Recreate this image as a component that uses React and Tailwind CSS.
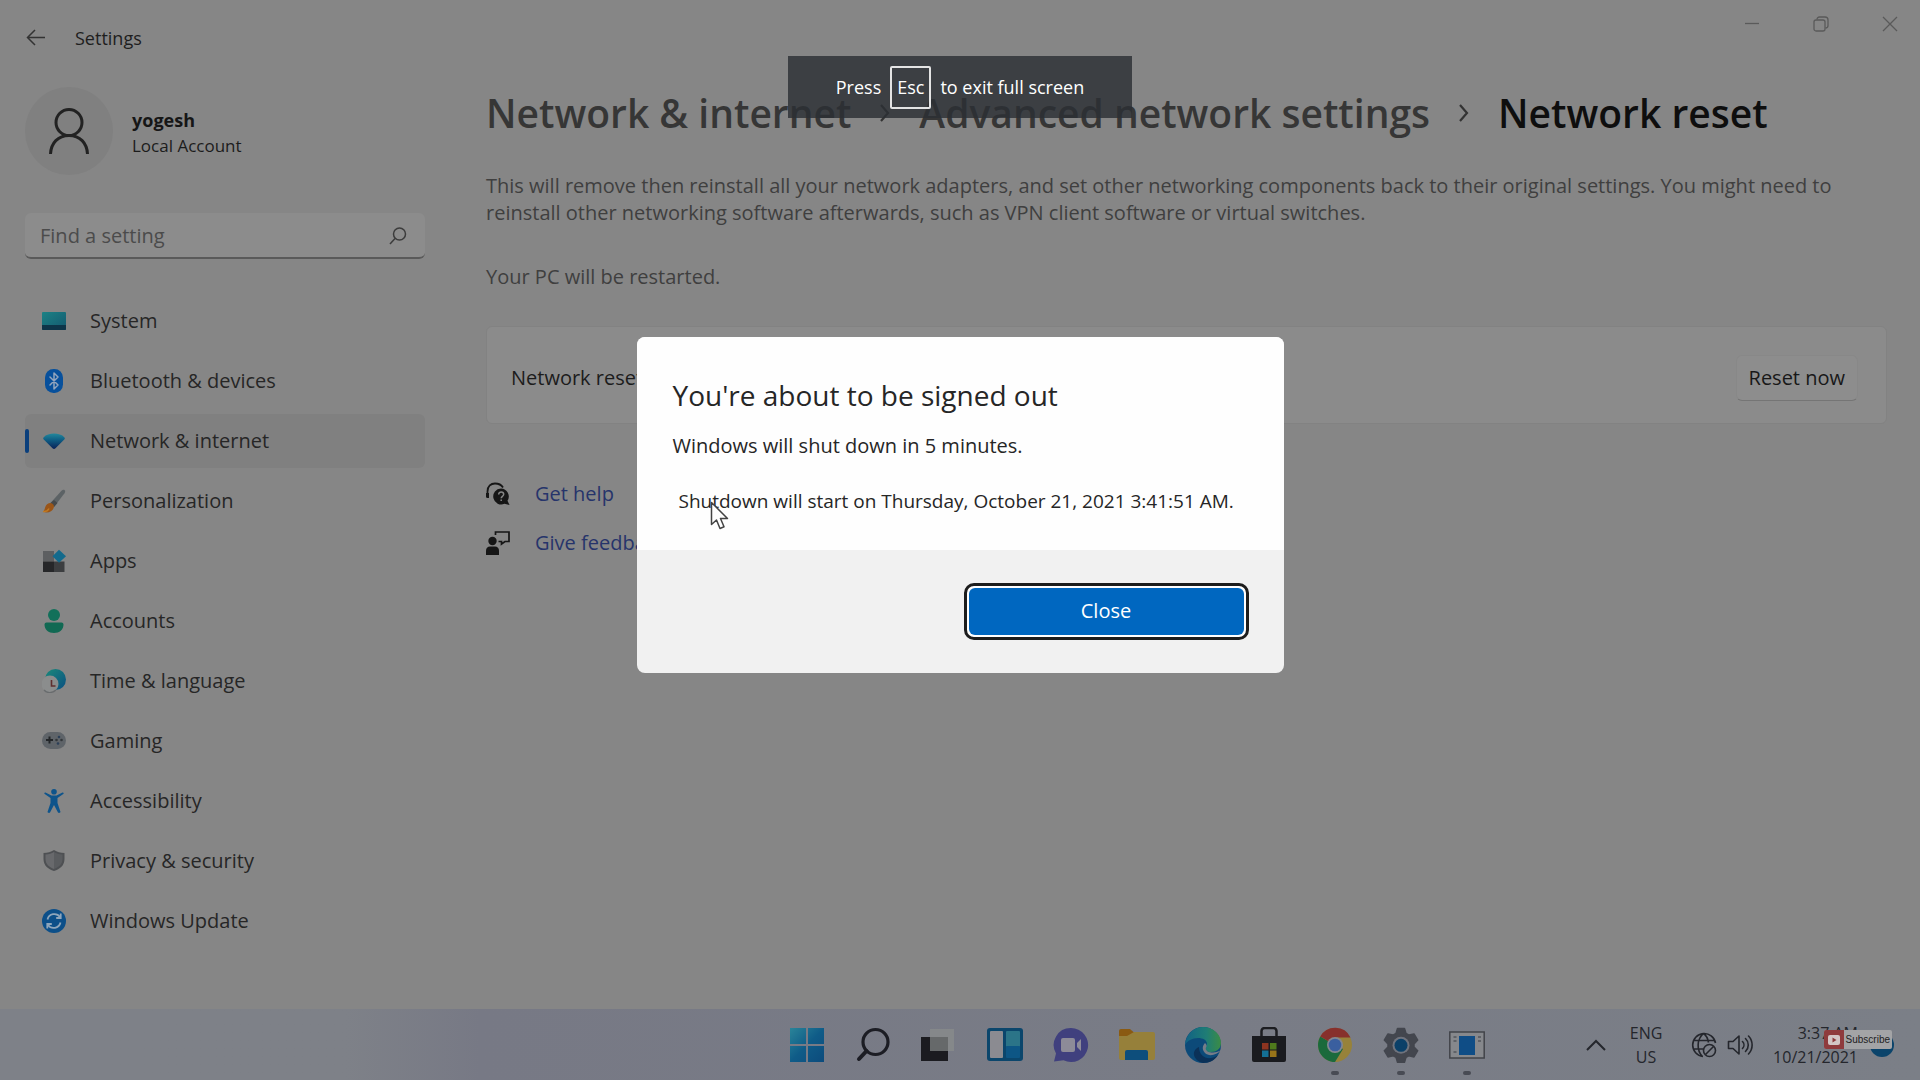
import React from 'react';

/* ---------- Sidebar icons ---------- */

const SystemIcon = () => (
  <svg viewBox="0 0 24 24" className="size-6">
    <defs>
      <linearGradient id="sys" x1="0" y1="0" x2="1" y2="1">
        <stop offset="0" stopColor="#1b8285" />
        <stop offset="1" stopColor="#14586f" />
      </linearGradient>
    </defs>
    <rect x="0" y="3" width="24" height="18" rx="1" fill="url(#sys)" />
    <path d="M0 16h24v4a1 1 0 0 1-1 1H1a1 1 0 0 1-1-1z" fill="#0d3549" />
  </svg>
);

const BluetoothIcon = () => (
  <svg viewBox="0 0 24 24" className="size-6">
    <rect x="3" y="0" width="18" height="24" rx="8.5" fill="#07509c" />
    <path d="M8 8l8 8-4 4V4l4 4-8 8" fill="none" stroke="#93a5bd" strokeWidth="1.5" strokeLinejoin="round" strokeLinecap="round" />
  </svg>
);

const NetworkIcon = () => (
  <svg viewBox="0 0 24 24" className="size-6">
    <defs>
      <linearGradient id="net" x1="0" y1="0" x2="0" y2="1">
        <stop offset="0" stopColor="#23889c" />
        <stop offset=".4" stopColor="#0f5f85" />
        <stop offset="1" stopColor="#0a2057" />
      </linearGradient>
    </defs>
    <path d="M1.5 8.5C4 5.500 8 4.500 12 4.500s8 1 10.500 4c.5.7.4 1.200 0 1.800l-9 9c-1 1-2 1-3 0l-9-9c-.5-.6-.5-1.200 0-1.800z" fill="url(#net)" />
  </svg>
);

const BrushIcon = () => (
  <svg viewBox="0 0 24 24" className="size-6">
    <path d="M22.500 1c1 .7.8 2 0 3.200L12 18l-4-3.500L19.500 1.700c1-1 2-1.200 3-.7z" fill="#5c6265" />
    <path d="M12 11l3.500 3L12 18l-4-3.500z" fill="#46494b" />
    <path d="M8 14c2.500 0 4.500 2 3.800 4.500C10.500 23 5 25 1 22.500 3 21.500 2.500 19 4 16.500 5 15 6.500 14 8 14z" fill="#9a5518" />
    <path d="M1 22.500c2.500.3 5-.8 6-3" stroke="#c07a22" strokeWidth="1.500" fill="none" />
  </svg>
);

const AppsIcon = () => (
  <svg viewBox="0 0 24 24" className="size-6">
    <rect x="1" y="2" width="11" height="10.500" fill="#5d5f61" />
    <rect x="1" y="12.500" width="11" height="10.500" fill="#262729" />
    <rect x="12" y="12.500" width="10.500" height="10.500" fill="#3c3e40" />
    <path d="M17 .7l7 6.500-7 6.500-6.500-6.500z" fill="#136a8c" />
  </svg>
);

const AccountsIcon = () => (
  <svg viewBox="0 0 24 24" className="size-6">
    <circle cx="12" cy="6" r="6" fill="#12705a" />
    <path d="M4.500 13.500h15a2 2 0 0 1 2 2c0 5-4 8.500-9.500 8.500s-9.500-3.500-9.500-8.500a2 2 0 0 1 2-2z" fill="#116953" />
  </svg>
);

const TimeIcon = () => (
  <svg viewBox="0 0 24 24" className="size-6">
    <defs>
      <linearGradient id="tm" x1="0" y1="0" x2="1" y2="1">
        <stop offset="0" stopColor="#1a8a7a" />
        <stop offset="1" stopColor="#0b4f82" />
      </linearGradient>
    </defs>
    <circle cx="13.500" cy="10.500" r="10.500" fill="url(#tm)" />
    <circle cx="8" cy="15" r="8.500" fill="#8b8d8d" />
    <path d="M9.500 11v6h4" stroke="#5f2f2f" strokeWidth="1.600" fill="none" />
    <path d="M2 21c3 3.500 8 3.500 12 0" stroke="#696c6e" strokeWidth="1.200" fill="none" />
  </svg>
);

const GamingIcon = () => (
  <svg viewBox="0 0 24 24" className="size-6">
    <rect x="0" y="3" width="24" height="17" rx="8.500" fill="#5f6469" />
    <path d="M7.500 7.500v7M4 11h7" stroke="#232629" strokeWidth="2" />
    <circle cx="17" cy="8" r="1.300" fill="#2c3f57" />
    <circle cx="19.500" cy="11" r="1.300" fill="#33373a" />
    <circle cx="14.500" cy="11" r="1.300" fill="#33373a" />
    <circle cx="16" cy="14.500" r="1.300" fill="#2c3f57" />
  </svg>
);

const AccessibilityIcon = () => (
  <svg viewBox="0 0 24 24" className="size-6">
    <circle cx="12" cy="2.800" r="2.800" fill="#0e548b" />
    <path d="M3.500 3.500l6 3h5l6-3c1-.4 1.600 1 .8 1.600L15.500 9v5l3 9c.2.900-2 1.400-2.500.5L12 16l-4 7.500c-.5.900-2.700.4-2.500-.5l3-9V9L2.700 5.100c-.8-.6-.2-2 .8-1.600z" fill="#0e548b" />
  </svg>
);

const ShieldIcon = () => (
  <svg viewBox="0 0 24 24" className="size-6">
    <path d="M12 1c3 2 6.500 3 10.500 3v6c0 6.500-4.500 10-10.500 12C6 20 1.500 16.500 1.500 10V4C5.500 4 9 3 12 1z" fill="#4e5053" />
    <path d="M12 3c2.500 1.600 5 2.400 8.500 2.600V10c0 5-3.500 8-8.500 10z" fill="#5a5c5f" />
    <path d="M12 3C9.500 4.600 7 5.400 3.500 5.600V10c0 5 3.500 8 8.500 10z" fill="#68696c" />
  </svg>
);

const UpdateIcon = () => (
  <svg viewBox="0 0 24 24" className="size-6">
    <circle cx="12" cy="12" r="12" fill="#0c4f89" />
    <path d="M5.500 10.500a7 7 0 0 1 12.500-2.500M18.500 13.500A7 7 0 0 1 6 16" fill="none" stroke="#8fa6bb" strokeWidth="1.800" />
    <path d="M18.700 4.500v4.500h-4.500M5.300 19.500V15h4.500" fill="none" stroke="#8fa6bb" strokeWidth="1.800" />
  </svg>
);

const NAV = [
  ['System', SystemIcon],
  ['Bluetooth & devices', BluetoothIcon],
  ['Network & internet', NetworkIcon],
  ['Personalization', BrushIcon],
  ['Apps', AppsIcon],
  ['Accounts', AccountsIcon],
  ['Time & language', TimeIcon],
  ['Gaming', GamingIcon],
  ['Accessibility', AccessibilityIcon],
  ['Privacy & security', ShieldIcon],
  ['Windows Update', UpdateIcon],
];

function TitleBar() {
  return (
    <header className="flex h-[75px] shrink-0 items-start justify-between">
      <div className="flex h-full items-center gap-[29px] pl-[26px]">
        <button aria-label="Back">
          <svg viewBox="0 0 20 20" className="size-5" fill="none" stroke="#333" strokeWidth="1.500">
            <path d="M19 9.500H1.500M9 2L1.500 9.500 9 17" />
          </svg>
        </button>
        <h2 className="text-[18px] leading-6 text-[#1e1e1e]">Settings</h2>
      </div>
      <div className="flex h-12 items-center gap-[53px] pr-[22px] text-[#5a5a5a]">
        <button aria-label="Minimize">
          <svg viewBox="0 0 16 16" className="size-4" fill="none" stroke="currentColor" strokeWidth="1.300">
            <path d="M1 7.500h14" />
          </svg>
        </button>
        <button aria-label="Restore">
          <svg viewBox="0 0 16 16" className="size-4" fill="none" stroke="currentColor" strokeWidth="1.300">
            <rect x="1" y="4" width="11" height="11" rx="2" />
            <path d="M4 3.500C4 2 5 1 6.500 1H12c2 0 3 1 3 3v5.500c0 1.500-1 2.500-2.500 2.500" />
          </svg>
        </button>
        <button aria-label="Close window">
          <svg viewBox="0 0 16 16" className="size-4" fill="none" stroke="currentColor" strokeWidth="1.300">
            <path d="M1 1l14 14M15 1L1 15" />
          </svg>
        </button>
      </div>
    </header>
  );
}

function Sidebar() {
  return (
    <aside className="w-[400px] shrink-0">
      <div className="flex h-28 items-center gap-[19px]">
        <div className="flex size-[88px] items-center justify-center rounded-full bg-[#808080]">
          <svg viewBox="0 0 40 48" className="h-12 w-10" fill="none" stroke="#222" strokeWidth="3">
            <circle cx="20" cy="15.500" r="13" />
            <path d="M1.500 47C2 36 9 28.500 20 28.500S38 36 38.500 47" />
          </svg>
        </div>
        <div className="pt-1">
          <p className="text-[18px] leading-[26px] font-bold text-[#161616]">yogesh</p>
          <p className="text-[17px] leading-[26px] text-[#1c1c1c]">Local Account</p>
        </div>
      </div>

      <div className="mt-[26px] flex h-[46px] items-center rounded-md border-b-2 border-[#5a5a5a] bg-[#8c8c8c] pt-px pr-[18px] pl-[15px]">
        <input
          aria-label="Find a setting"
          placeholder="Find a setting"
          className="min-w-0 flex-1 bg-transparent text-[20px] leading-7 text-[#222] outline-none placeholder:text-[#4b4b4b]"
        />
        <button aria-label="Search">
          <svg viewBox="0 0 18 18" className="size-[18px]" fill="none" stroke="#3c3c3c" strokeWidth="1.500">
            <circle cx="10.500" cy="7" r="6" />
            <path d="M6 11.500L1 17" />
          </svg>
        </button>
      </div>

      <nav className="mt-[35px] flex flex-col gap-[6px]">
        {NAV.map(([label, Icon]) => {
          const active = label === 'Network & internet';
          return (
            <a
              key={label}
              href="#"
              aria-current={active ? 'page' : undefined}
              className={
                'flex h-[54px] items-center rounded-md text-[20px] text-[#262626] ' + (active ? 'bg-[#808080]' : '')
              }
            >
              <span className={'h-6 w-1 rounded-full ' + (active ? 'bg-[#0a3f7c]' : '')} />
              <span className="mr-6 ml-[13px]">
                <Icon />
              </span>
              {label}
            </a>
          );
        })}
      </nav>
    </aside>
  );
}

const Chevron = () => (
  <svg viewBox="0 0 12 18" className="h-[18px] w-3" fill="none" stroke="#333" strokeWidth="2.200">
    <path d="M2 1l7 8-7 8" />
  </svg>
);

function MainPanel() {
  return (
    <main className="min-w-0 flex-1 pr-[33px] pl-[61px]">
      <nav aria-label="Breadcrumb" className="flex h-[76px] items-center gap-7 text-[39px] font-semibold whitespace-nowrap text-[#363636]">
        <a href="#">Network &amp; internet</a>
        <Chevron />
        <a href="#">Advanced network settings</a>
        <Chevron />
        <h1 className="text-[#0e0e0e]">Network reset</h1>
      </nav>

      <p className="mt-[21px] text-[20px] leading-[27px] text-[#3f3f3f]">
        This will remove then reinstall all your network adapters, and set other networking components back to their
        original settings. You might need to reinstall other networking software afterwards, such as VPN client software
        or virtual switches.
      </p>
      <p className="mt-[37px] text-[20px] leading-[27px] text-[#3f3f3f]">Your PC will be restarted.</p>

      <section className="mt-9 flex h-[98px] items-center justify-between rounded-md border border-[#828282] bg-[#8b8b8b] pt-[6px] pr-[28px] pl-6">
        <span className="text-[20px] text-[#1c1c1c]">Network reset</span>
        <button className="h-[46px] rounded-md border border-[#888] border-b-[#757575] bg-[#8d8d8d] px-3 text-[20px] text-[#181818]">
          Reset now
        </button>
      </section>

      <div className="mt-12 flex flex-col gap-[5px] text-[20px] text-[#26346b]">
        <a href="#" className="flex h-11 items-center gap-[25px]">
          <svg viewBox="0 0 24 24" className="size-6">
            <path d="M1.500 15V9.500C1.500 4 5 1.500 9 1.500S15.500 3 17 5.500" fill="none" stroke="#161616" strokeWidth="1.800" />
            <path d="M0 11h3v5H1.500a1.500 1.500 0 0 1-1.500-1.500z" fill="#161616" />
            <path d="M15 6.500a8 8 0 0 1 6.500 12.300L23.500 23l-5-1.200A8 8 0 1 1 15 6.500z" fill="#161616" />
            <path d="M12.700 12.500c0-3.500 5-3.200 5-.2 0 2-2.500 2-2.500 4M15.200 17.500v1.600" fill="none" stroke="#858585" strokeWidth="1.500" />
          </svg>
          Get help
        </a>
        <a href="#" className="flex h-11 items-center gap-[25px]">
          <svg viewBox="0 0 24 24" className="size-6">
            <circle cx="6.500" cy="10" r="4.200" fill="#161616" />
            <path d="M0 24v-4c0-3 1.500-4.500 4-4.500h5c2.500 0 4 1.500 4 4.500v4z" fill="#161616" />
            <path d="M9.500 4V1h13.500v9.500h-4l-3.500 2.500v-2.500h-3" fill="none" stroke="#161616" strokeWidth="1.700" />
          </svg>
          Give feedback
        </a>
      </div>
    </main>
  );
}

/* ---------- Taskbar icons ---------- */

const TASKS = [
  {
    name: 'Start',
    art: (
      <>
        <defs>
          <linearGradient id="win" x1="0" y1="0" x2="1" y2="1">
            <stop offset="0" stopColor="#2a8499" />
            <stop offset=".5" stopColor="#0f5c88" />
            <stop offset="1" stopColor="#0c4b7c" />
          </linearGradient>
        </defs>
        <path d="M1 1h16v16H1zM19 1h16v16H19zM1 19h16v16H1zM19 19h16v16H19z" fill="url(#win)" />
      </>
    ),
  },
  {
    name: 'Search',
    art: (
      <>
        <circle cx="20.500" cy="15" r="12.500" fill="none" stroke="#1c1d24" strokeWidth="3.200" />
        <path d="M11.500 24L4 32" stroke="#1c1d24" strokeWidth="4" strokeLinecap="round" />
      </>
    ),
  },
  {
    name: 'Task view',
    art: (
      <>
        <path d="M0 10h27v24H0z" fill="#1b1b20" />
        <path d="M9 2h24v22H9z" fill="#85888a" />
        <path d="M9 10h18v14H9z" fill="#66696a" />
      </>
    ),
  },
  {
    name: 'Widgets',
    art: (
      <>
        <rect x="0" y="1" width="36" height="33" rx="3" fill="#0b466c" />
        <rect x="3" y="4" width="13" height="27" rx="1" fill="#8b8b91" />
        <rect x="19" y="4" width="14" height="16" rx="1" fill="#2b7488" />
        <rect x="19" y="19" width="14" height="12" rx="1" fill="#0d5685" />
      </>
    ),
  },
  {
    name: 'Chat',
    art: (
      <>
        <path d="M18 1a17 17 0 1 1-7.500 32.200L1 34.500l2-8A17 17 0 0 1 18 1z" fill="#40407e" />
        <rect x="8" y="11" width="14" height="14" rx="2" fill="#8d8b98" />
        <path d="M24 16l4-4v12l-4-4z" fill="#8d8b98" />
      </>
    ),
  },
  {
    name: 'File Explorer',
    art: (
      <>
        <path d="M0 4a2 2 0 0 1 2-2h9l4 3.500v6H0z" fill="#8a5a12" />
        <path d="M0 9h8l7-4h19a2 2 0 0 1 2 2v24a2 2 0 0 1-2 2H2a2 2 0 0 1-2-2z" fill="#96803a" />
        <path d="M6 25a2 2 0 0 1 2-2h19a2 2 0 0 1 2 2v8H6z" fill="#0d4e7c" />
      </>
    ),
  },
  {
    name: 'Edge',
    art: (
      <>
        <defs>
          <linearGradient id="edg" x1="0" y1="0" x2="1" y2="0">
            <stop offset="0" stopColor="#116285" />
            <stop offset=".6" stopColor="#1f7d75" />
            <stop offset="1" stopColor="#3b8c45" />
          </linearGradient>
        </defs>
        <circle cx="18" cy="18" r="18" fill="#0c4a79" />
        <path d="M0 18C1 7 9 0 18 0c10 0 18 7 18 16 0 6-5 9-10 9-4 0-6-2-5.500-4 .5-1.500 1.500-2 1.500-4 0-4-4-6-9-6-6 0-11 3-13 7z" fill="url(#edg)" />
        <path d="M14 20c0 8 6 12 12 11 3-.4 5-1.500 7-3-3 5-8 8-15 8C9 34 5 24 14 20z" fill="#0b3158" />
        <path d="M36 23c-4 5-12 7-16 3-3-3-3-7 0-10 2 2 2 3 1 4.500-1 2 1.500 5 5.500 5 4 .5 7-1 9.500-2.500z" fill="#777d88" />
      </>
    ),
  },
  {
    name: 'Microsoft Store',
    art: (
      <>
        <path d="M10.500 11V4a3 3 0 0 1 3-3h9a3 3 0 0 1 3 3v7" fill="none" stroke="#1c1d21" strokeWidth="2.500" />
        <path d="M1 9h34v24a2 2 0 0 1-2 2H3a2 2 0 0 1-2-2z" fill="#1a1b1f" />
        <path d="M11 16h6.500v6.500H11z" fill="#8d3420" />
        <path d="M19 16h6.500v6.500H19z" fill="#4f7a1c" />
        <path d="M11 23.500h6.500V30H11z" fill="#147096" />
        <path d="M19 23.500h6.500V30H19z" fill="#98741a" />
      </>
    ),
  },
  {
    name: 'Chrome',
    running: true,
    art: (
      <>
        <circle cx="18" cy="18" r="17" fill="#97823a" />
        <path d="M18 18L3.300 9.500A17 17 0 0 0 18 35l8-13z" fill="#1b6a3c" />
        <path d="M18 18L3.300 9.500A17 17 0 0 1 33.500 10.500H18z" fill="#87302c" />
        <circle cx="18" cy="18" r="8" fill="#838791" />
        <circle cx="18" cy="18" r="6.300" fill="#3a5f9f" />
      </>
    ),
  },
  {
    name: 'Settings',
    running: true,
    art: (
      <>
        <path
          d="M14.500 1.500h7l1.500 5 3 1.600 5-1.200 3.700 6.200L31 17v3l3.700 3.700-3.700 6.200-5-1.200-3 1.600-1.500 5h-7l-1.500-5-3-1.600-5 1.200-3.700-6.200L5 20v-3l-3.700-3.900L5 6.900l5 1.200 3-1.600z"
          fill="#43464e"
          stroke="#43464e"
          strokeWidth="1.500"
          strokeLinejoin="round"
        />
        <circle cx="18" cy="18.300" r="8.500" fill="#6f737d" />
        <circle cx="18" cy="18.300" r="6.500" fill="#0b4068" />
      </>
    ),
  },
  {
    name: 'System dialog',
    running: true,
    art: (
      <>
        <rect x=".8" y="5" width="34.400" height="26" fill="#86888c" stroke="#42444a" strokeWidth="1.500" />
        <rect x="10" y="9" width="16" height="19" fill="#0f4d86" />
        <path d="M4.500 10h3M4.500 14h3M4.500 25h3M29 10h3M29 14h3" stroke="#53565c" strokeWidth="1.300" />
      </>
    ),
  },
];

function Taskbar() {
  return (
    <footer className="relative flex h-[71px] shrink-0 items-center justify-end bg-linear-to-r from-[#7e8188] from-18% via-[#777985] via-25% to-[#7b7f87] pr-[26px] text-[16px] text-[#24262c]">
      <div className="mr-[72px] flex">
        {TASKS.map(({ name, art, running }) => (
          <button key={name} aria-label={name} className="relative flex h-[60px] w-[66px] items-center justify-center">
            <svg viewBox="0 0 36 36" className="size-9">
              {art}
            </svg>
            {running && <span className="absolute bottom-0 h-1 w-2 rounded-full bg-[#484b54]" />}
          </button>
        ))}
      </div>
      <button aria-label="Show hidden icons" className="flex w-12 justify-center">
        <svg viewBox="0 0 20 12" className="h-3 w-5" fill="none" stroke="currentColor" strokeWidth="2">
          <path d="M1 11l9-9 9 9" />
        </svg>
      </button>
      <button aria-label="Input language" className="w-[52px] text-center leading-6">
        ENG
        <br />
        US
      </button>
      <button aria-label="Network and volume" className="ml-[19px] flex gap-[10px]">
        <svg viewBox="0 0 26 26" className="size-[26px]" fill="none" stroke="currentColor" strokeWidth="1.600">
          <path d="M24.500 11A11.500 11.500 0 1 0 12 24.500M2 8.500h21M2 17h10M12.500 1.500c-7 6-7 17-1 23M12.500 1.500c3 2 4.500 6 5 9" />
          <circle cx="18.500" cy="18.500" r="6" />
          <path d="M14.500 22.500l8-8" />
        </svg>
        <svg viewBox="0 0 26 26" className="size-[26px]" fill="none" stroke="currentColor" strokeWidth="1.600" strokeLinejoin="round">
          <path d="M1.500 9.500h4.500l6-5.500v18l-6-5.500H1.500z" />
          <path d="M15.500 9.500a5 5 0 0 1 0 7M18.500 6.500a9 9 0 0 1 0 13M21.500 4a13 13 0 0 1 0 18" strokeLinecap="round" />
        </svg>
      </button>
      <button aria-label="Date and time" className="ml-5 text-right leading-6">
        3:37 AM
        <br />
        10/21/2021
      </button>
      <span className="ml-3 size-6 rounded-full bg-[#0b446b]" />
      <button className="absolute top-[21px] right-7 flex h-[19px] items-center overflow-hidden rounded-xs bg-[#a3a4a6] font-['Liberation_Sans'] text-[10px] text-[#222]">
        <span className="flex h-full w-5 items-center justify-center bg-[#8f3b3d]">
          <svg viewBox="0 0 12 10" className="h-[10px] w-3">
            <rect width="12" height="10" rx="2" fill="#d3c6c6" />
            <path d="M4.500 2.500v5l4-2.500z" fill="#8f3b3d" />
          </svg>
        </span>
        <span className="px-[2px]">Subscribe</span>
      </button>
    </footer>
  );
}

function FullScreenHint() {
  return (
    <div className="absolute inset-x-0 top-14 flex justify-center">
      <div className="flex h-[62px] items-center gap-[9px] bg-[rgba(44,47,53,0.82)] px-12 text-[18px] text-white">
        <span>Press</span>
        <kbd className="flex h-[43px] items-center rounded-xs border-2 border-[#e4e4e4] px-[5px] font-[inherit]">Esc</kbd>
        <span>to exit full screen</span>
      </div>
    </div>
  );
}

function SignOutDialog() {
  return (
    <div className="absolute inset-0 flex items-center justify-center">
      <div
        role="dialog"
        aria-labelledby="dlg-title"
        className="relative w-[647px] overflow-hidden rounded-lg bg-[#f1f1f1] text-[#262626]"
      >
        <div className="bg-[#fefefe] px-9 pt-10 pb-[35px]">
          <h2 id="dlg-title" className="text-[28px] leading-9">
            You&apos;re about to be signed out
          </h2>
          <p className="mt-[19px] text-[20px] leading-7">Windows will shut down in 5 minutes.</p>
          <p className="mt-[27px] pl-[6px] text-[19px] leading-7 whitespace-nowrap">
            Shutdown will start on Thursday, October 21, 2021 3:41:51 AM.
          </p>
        </div>
        <div className="flex justify-end px-[35px] pt-[33px] pb-[33px]">
          <button className="h-[57px] w-[285px] rounded-[10px] border-[3px] border-[#1d1d1d] bg-white p-[2px] text-[20px] text-white">
            <span className="flex h-full items-center justify-center rounded-md bg-[#0067c0]">Close</span>
          </button>
        </div>
        <svg viewBox="0 0 20 29" className="absolute top-[164px] left-[73px] h-[29px] w-5">
          <path d="M1.500 1.500v22l5-4.500 3.500 8.500 4-1.700-3.500-8.300h7z" fill="#fff" stroke="#444" strokeWidth="1.500" strokeLinejoin="round" />
        </svg>
      </div>
    </div>
  );
}

export default function App() {
  return (
    <div className="flex min-h-screen flex-col bg-[#868686] font-['Open_Sans','Noto_Sans',sans-serif]">
      <div className="relative flex flex-1 flex-col">
        <TitleBar />
        <div className="flex flex-1 pl-[25px]">
          <Sidebar />
          <MainPanel />
        </div>
        <SignOutDialog />
        <FullScreenHint />
      </div>
      <Taskbar />
    </div>
  );
}
